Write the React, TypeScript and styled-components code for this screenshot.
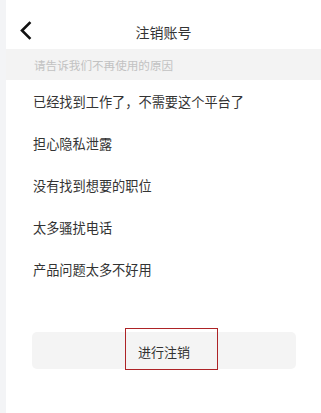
import React from "react";
import styled, { createGlobalStyle } from "styled-components";

const Global = createGlobalStyle`
  html, body { margin: 0; padding: 0; background: #ffffff; }
  body { font-family: "Noto Sans CJK SC", "Noto Sans", sans-serif; }
`;

const Page = styled.div`
  display: flex;
  width: 321px;
  height: 413px;
  overflow: hidden;
  background: #ffffff;
`;

const SideStrip = styled.div`
  width: 6px;
  flex-shrink: 0;
  background: #f3f4f6;
`;

const Main = styled.div`
  flex: 1;
  display: flex;
  flex-direction: column;
`;

const Header = styled.div`
  position: relative;
  height: 49px;
  display: flex;
  align-items: center;
  justify-content: center;
  box-sizing: border-box;
`;

const BackButton = styled.div`
  position: absolute;
  left: 13px;
  top: 21px;
  width: 14px;
  height: 19px;
  display: flex;
`;

const Title = styled.div`
  font-size: 14px;
  color: #333333;
  margin-top: 15px;
  line-height: 20px;
`;

const Hint = styled.div`
  height: 31px;
  background: #f3f3f3;
  display: flex;
  align-items: center;
  padding-left: 28px;
  font-size: 11.6px;
  color: #c2c2c2;
`;

const List = styled.div`
  display: flex;
  flex-direction: column;
`;

const Item = styled.div`
  height: 42px;
  display: flex;
  align-items: center;
  padding-left: 27px;
  font-size: 13.2px;
  color: #333333;
`;

const Footer = styled.div`
  padding: 42px 25px 0 26px;
`;

const SubmitButton = styled.div`
  height: 37px;
  border-radius: 5px;
  background: #f4f4f4;
  display: flex;
  align-items: center;
  justify-content: center;
`;

const SubmitLabel = styled.span`
  position: relative;
  font-size: 13px;
  color: #333333;
  line-height: 18px;
  margin-top: 2px;
  &::after {
    content: "";
    position: absolute;
    left: -13px;
    right: -28px;
    top: -15px;
    bottom: -9px;
    border: 1px solid #ad2326;
  }
`;

const reasons = [
  "已经找到工作了，不需要这个平台了",
  "担心隐私泄露",
  "没有找到想要的职位",
  "太多骚扰电话",
  "产品问题太多不好用",
];

export default function App() {
  return (
    <>
      <Global />
      <Page>
        <SideStrip />
        <Main>
          <Header>
            <BackButton>
              <svg width="14" height="19" viewBox="0 0 14 19">
                <path
                  d="M10.5 2 L3 9.5 L10.5 17"
                  fill="none"
                  stroke="#111"
                  strokeWidth="2.6"
                  strokeLinecap="square"
                  strokeLinejoin="miter"
                />
              </svg>
            </BackButton>
            <Title>注销账号</Title>
          </Header>
          <Hint>请告诉我们不再使用的原因</Hint>
          <List>
            {reasons.map((r) => (
              <Item key={r}>{r}</Item>
            ))}
          </List>
          <Footer>
            <SubmitButton>
              <SubmitLabel>进行注销</SubmitLabel>
            </SubmitButton>
          </Footer>
        </Main>
      </Page>
    </>
  );
}
